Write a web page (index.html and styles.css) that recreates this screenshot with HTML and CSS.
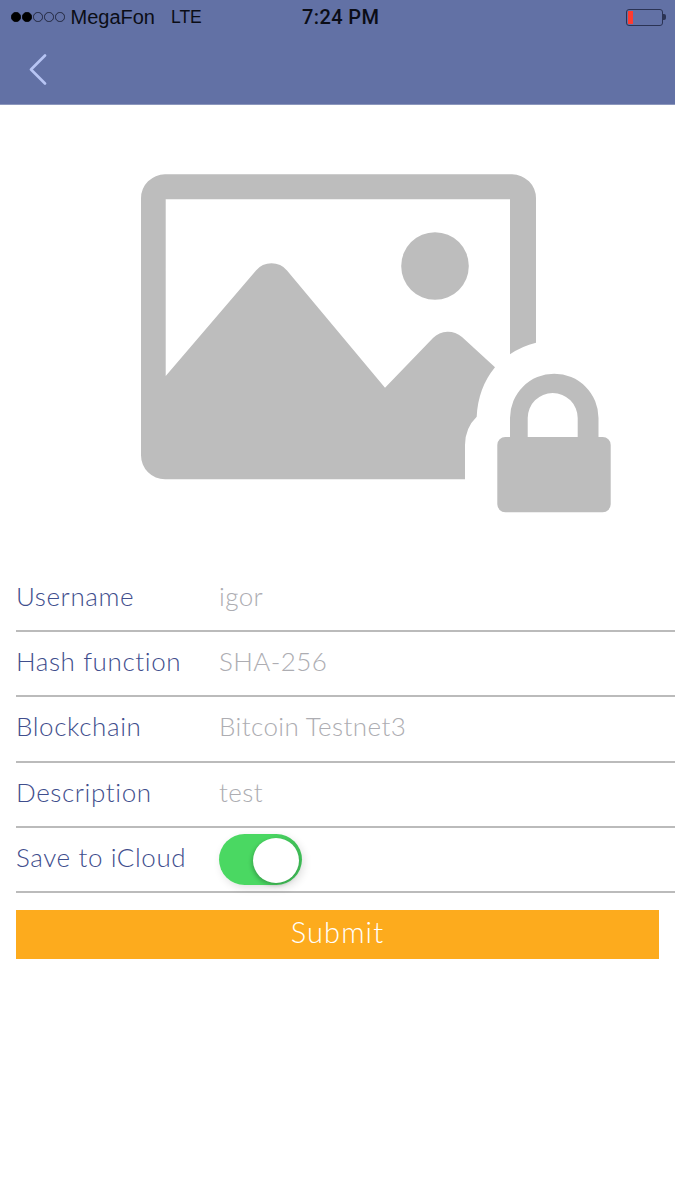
FILE: index.html
```html
<!DOCTYPE html>
<html lang="en">
<head>
    <meta charset="UTF-8">
    <meta name="viewport" content="width=device-width, initial-scale=1.0">
    <title>Submit</title>
    <link rel="stylesheet" href="styles.css">
</head>
<body>
    <div class="head">
        <div class="status">
            <div class="carrier">
                <span class="dots">
                    <i class="dot on"></i><i class="dot on"></i><i class="dot"></i><i class="dot"></i><i class="dot"></i>
                </span>
                <span class="carrier-name">MegaFon</span>
                <span class="network">LTE</span>
            </div>
            <div class="time">7:24 PM</div>
            <div class="battery"><div class="battery-level"></div></div>
        </div>
        <div class="nav">
            <svg class="back" width="20" height="32" viewBox="0 0 20 32">
                <path d="M17 2.5 L3 16.5 L17 30.5" fill="none" stroke="#b7c5f4" stroke-width="2.6" stroke-linecap="round" stroke-linejoin="round"/>
            </svg>
        </div>
    </div>
    <div class="picture">
        <svg class="picture-icon" width="490" height="355" viewBox="130 165 490 355">
            <path fill="#bdbdbd" fill-rule="evenodd" d="M165 174.3 H512 A24 24 0 0 1 536 198.3 V342.7 Q522 346 510 354.3 V199.3 H165.7 V376 L256 270.5 A20 20 0 0 1 287 270.5 L385 387.7 L433 338 A21 21 0 0 1 462 337 L495 367.3 Q478 388 476.7 416.7 Q465 428 465 445 V479.3 H165 A24 24 0 0 1 141 455.3 V198.3 A24 24 0 0 1 165 174.3 Z"/>
            <circle cx="435" cy="266" r="33.8" fill="#bdbdbd"/>
            <path fill="#bdbdbd" fill-rule="evenodd" d="M510 437 V418 A44 44 0 0 1 598.5 418 V437 H602.7 A8 8 0 0 1 610.7 445 V504.3 A8 8 0 0 1 602.7 512.3 H505.3 A8 8 0 0 1 497.3 504.3 V445 A8 8 0 0 1 505.3 437 Z M527.7 437 H577.7 V418 A25 25 0 0 0 527.7 418 Z"/>
        </svg>
    </div>
    <div class="form">
        <div class="row">
            <div class="label">Username</div>
            <div class="value">igor</div>
        </div>
        <div class="row">
            <div class="label">Hash function</div>
            <div class="value">SHA-256</div>
        </div>
        <div class="row">
            <div class="label">Blockchain</div>
            <div class="value">Bitcoin Testnet3</div>
        </div>
        <div class="row">
            <div class="label">Description</div>
            <div class="value">test</div>
        </div>
        <div class="row">
            <div class="label">Save to iCloud</div>
            <div class="toggle"><div class="knob"></div></div>
        </div>
    </div>
    <div class="submit">Submit</div>
</body>
</html>
```

FILE: styles.css
```css
*{
    box-sizing: border-box;
}
body{
    margin: 0;
    background-color: #fff;
    font-family: "Lato", "Liberation Sans", sans-serif;
}
div.head{
    height: 105px;
    background-color: #6271a5;
    border-bottom: 1px solid #8c97bd;
}
div.status{
    height: 34px;
    display: flex;
    align-items: center;
    position: relative;
    padding: 0 12px 0 11px;
    font-family: "Liberation Sans", sans-serif;
    font-size: 20px;
    color: #0b0d16;
}
div.carrier{
    display: flex;
    align-items: center;
    flex: 1;
}
span.dots{
    display: flex;
    gap: 1.5px;
    margin-right: 6px;
}
i.dot{
    width: 9.5px;
    height: 9.5px;
    border: 1px solid #23283f;
    border-radius: 50%;
}
i.dot.on{
    background-color: #000;
    border-color: #000;
}
span.network{
    margin-left: 16px;
    font-size: 17.5px;
}
div.time{
    position: absolute;
    left: 302px;
    font-family: "Roboto", sans-serif;
    font-weight: 500;
    font-size: 20px;
    letter-spacing: 0.4px;
}
div.battery{
    width: 37px;
    height: 17px;
    border: 1px solid #2b3354;
    border-radius: 3px;
    padding: 1px;
    position: relative;
}
div.battery::after{
    content: "";
    position: absolute;
    right: -4px;
    top: 4px;
    width: 3px;
    height: 6px;
    background-color: #2b3354;
    border-radius: 0 2px 2px 0;
}
div.battery-level{
    width: 5px;
    height: 100%;
    background-color: #ff3b30;
}
div.nav{
    height: 70px;
    padding: 19px 0 0 28px;
}
svg.back{
    display: block;
}
div.picture{
    height: 462px;
    padding: 60px 0 0 130px;
}
svg.picture-icon{
    display: block;
    filter: blur(0.4px);
}
div.form{
    margin-left: 16px;
}
div.row{
    height: 65.2px;
    display: flex;
    align-items: center;
    padding-bottom: 5px;
    border-bottom: 2px solid #bbb;
    font-size: 26px;
    font-weight: 300;
}
div.label{
    width: 203px;
    color: #3f4e8d;
    letter-spacing: 0.6px;
}
div.value{
    color: #adadb2;
    letter-spacing: 0.4px;
}
div.toggle{
    width: 83px;
    height: 51px;
    margin-top: 5px;
    padding: 4px 3px;
    display: flex;
    justify-content: flex-end;
    background: linear-gradient(90deg, #4ad862 60%, #3fbc57);
    border-radius: 26px;
    box-shadow: 2px 3px 8px rgba(0, 0, 0, 0.12);
}
div.knob{
    width: 46px;
    height: 45px;
    background-color: #fff;
    border-radius: 50%;
    box-shadow: -1px 2px 4px rgba(0, 0, 0, 0.25);
}
div.submit{
    margin: 17px 16px 0;
    height: 49px;
    line-height: 44px;
    text-align: center;
    background-color: #fdab1d;
    color: #fff;
    font-size: 29px;
    font-weight: 300;
    letter-spacing: 1.1px;
}
```
